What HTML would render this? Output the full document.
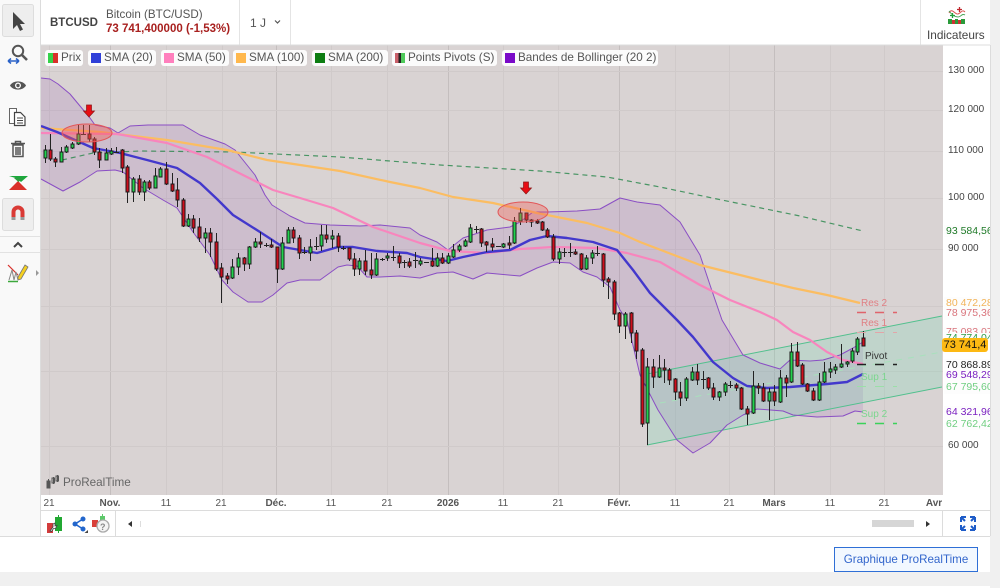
<!DOCTYPE html>
<html lang="fr"><head><meta charset="utf-8"><title>BTCUSD</title>
<style>
html,body{margin:0;padding:0;background:#fff}
#p{position:relative;width:1000px;height:588px;overflow:hidden;background:#fff;font-family:"Liberation Sans",sans-serif;color:#555}
.a{position:absolute}
.t{position:absolute;white-space:nowrap}
.chip{position:absolute;top:50px;height:16px;background:#fbfbfb;border-radius:3px;font-size:11.7px;line-height:16px;color:#555;white-space:nowrap}
.chip i{position:absolute;left:3px;top:3px;width:10px;height:10px;display:block}
.chip span{position:absolute;left:16px;top:0}
.y{position:absolute;left:948px;font-size:10px;line-height:12px;color:#444;white-space:nowrap}
.l{position:absolute;left:944px;width:46px;overflow:hidden;background:#fdfdfd;font-size:10.5px;white-space:nowrap;padding-left:2px;box-sizing:border-box}
.x{position:absolute;top:498px;width:40px;margin-left:-20px;text-align:center;font-size:10px;line-height:12px;color:#555}
</style></head><body><div id="p">
<div class="a" style="left:0;top:0;width:40px;height:536px;background:#f9f9f9;border-right:1px solid #e2e2e2"></div>
<div class="a" style="left:990px;top:0;width:10px;height:588px;background:#f0f0f0"></div>
<div class="a" style="left:0;top:572px;width:1000px;height:14px;background:#f0f0f0"></div>
<div class="a" style="left:239px;top:0;width:1px;height:45px;background:#e4e4e4"></div>
<div class="a" style="left:290px;top:0;width:1px;height:45px;background:#e4e4e4"></div>
<div class="a" style="left:920px;top:0;width:1px;height:45px;background:#e4e4e4"></div>
<div class="t" style="left:50px;top:16px;font-size:11.5px;font-weight:bold;color:#444;line-height:14px">BTCUSD</div>
<div class="t" style="left:106px;top:8px;font-size:11.6px;color:#555;line-height:14px">Bitcoin (BTC/USD)</div>
<div class="t" style="left:106px;top:22px;font-size:11.5px;font-weight:bold;color:#a8201f;line-height:14px">73 741,400000 (-1,53%)</div>
<div class="t" style="left:250px;top:16px;font-size:12px;color:#555;line-height:14px">1 J</div>
<div class="t" style="left:927px;top:28px;font-size:11.8px;color:#444;line-height:14px">Indicateurs</div>

<svg class="a" style="left:0;top:0;filter:blur(.3px)" width="1000" height="588" viewBox="0 0 1000 588">
<rect x="41" y="45" width="902" height="450" fill="#d9d3d3"/>
<g stroke="#d0caca" fill="none">
<path d="M49.5 45V495M166.5 45V495M222.5 45V495M331.5 45V495M387.5 45V495M503.5 45V495M558.5 45V495M675.5 45V495M729.5 45V495M830.5 45V495M884.5 45V495"/>
<path stroke="#c4bebe" d="M110.5 45V495M276.5 45V495M448.5 45V495M619.5 45V495M774.5 45V495"/>
<path d="M41 71.5H943M41 110.5H943M41 151.5H943M41 198.5H943M41 249.5H943M41 306.5H943M41 371.5H943M41 446.5H943"/>
</g>
<path fill="#7a2aa8" fill-opacity=".12" d="M41 78L50 79L58 84L70 94L80 106L90 118L95 125L110 128L118 133L130 126L148 125L183 125L200 135L225 144L235 150L255 175L265 195L272 205L290 216L305 223L330 225L360 226L380 225L410 228L420 235L437 242L448 250L463 238L487 230L510 227L520 222L533 212L547 212L577 211L600 209L620 198L637 202L660 205L680 222L700 255L710 285L722 320L743 355L760 363L780 369L790 360L810 361L823 360L840 355L853 348L863 342L863 412L855 411L843 416L817 417L793 415L783 411L757 409L743 415L727 425L710 443L693 453L677 440L658 410L640 375L627 320L620 310L610 287L597 277L583 272L570 263L553 262L537 268L520 276L487 273L473 279L453 272L437 273L420 278L400 276L380 277L367 277L357 266L347 265L338 267L320 280L300 280L287 283L273 295L262 302L248 302L233 292L222 280L210 255L193 232L177 208L163 200L143 188L123 172L115 170L97 171L80 182L63 191L41 179Z"/>
<path fill="#78d7b4" fill-opacity=".25" d="M647 374L942 316V387L647 445Z"/>
<path fill="none" stroke="#52c08e" stroke-width="1" d="M647 374L942 316M647 445L942 387"/>
<path fill="none" stroke="#a8e0bc" stroke-dasharray="6 6" d="M660 403L942 352"/>
<g fill="none" stroke="#8a4ec4" stroke-width="1" stroke-linejoin="round">
<path d="M41 78L50 79L58 84L70 94L80 106L90 118L95 125L110 128L118 133L130 126L148 125L183 125L200 135L225 144L235 150L255 175L265 195L272 205L290 216L305 223L330 225L360 226L380 225L410 228L420 235L437 242L448 250L463 238L487 230L510 227L520 222L533 212L547 212L577 211L600 209L620 198L637 202L660 205L680 222L700 255L710 285L722 320L743 355L760 363L780 369L790 360L810 361L823 360L840 355L853 348L863 342"/>
<path d="M41 179L63 191L80 182L97 171L115 170L123 172L143 188L163 200L177 208L193 232L210 255L222 280L233 292L248 302L262 302L273 295L287 283L300 280L320 280L338 267L347 265L357 266L367 277L380 277L400 276L420 278L437 273L453 272L473 279L487 273L520 276L537 268L553 262L570 263L583 272L597 277L610 287L620 310L627 320L640 375L658 410L677 440L693 453L710 443L727 425L743 415L757 409L783 411L793 415L817 417L843 416L855 411L863 412"/>
</g>
<path fill="none" stroke="#2f8a50" stroke-opacity=".85" stroke-width="1.200" stroke-dasharray="5 4" d="M62 160L93 153L140 151L233 152L340 157L440 165L540 171L607 177L660 187L717 199L800 216L863 231"/>
<path fill="none" stroke="#fbbd62" stroke-width="2.200" stroke-linejoin="round" d="M41 128L100 132L167 140L227 150L267 160L340 171L390 182L420 188L453 197L493 203L537 213L587 223L620 233L640 242L700 265L760 280L793 288L827 295L860 303"/>
<path fill="none" stroke="#f885bd" stroke-width="2.200" stroke-linejoin="round" d="M41 133L117 134L167 143L207 157L233 170L273 190L300 198L333 208L373 227L420 243L450 251L487 253L520 249L553 247L597 248L627 253L660 262L700 285L730 300L760 312L777 320L793 332L810 340L827 352L843 360L863 364"/>
<path fill="none" stroke="#4338cc" stroke-width="2.400" stroke-linejoin="round" d="M41 126L57 132L93 148L120 153L147 160L177 168L200 183L217 199L233 215L260 232L283 247L317 253L338 247L353 247L377 251L407 253L420 257L447 261L463 257L487 252L510 250L530 240L547 236L567 238L593 242L617 250L633 270L650 293L677 320L693 337L713 362L733 378L747 386L767 388L790 387L827 384L847 382L863 374"/>
<path fill="none" stroke="#222" stroke-width="1" d="M45.5 145V163M50.5 134V161M55.5 157V167M61.5 147V162M66.5 145V153M72.5 142V149M78.5 125V145M83.5 125V135M89.5 125V142M94.5 137V155M99.5 148V168M106.5 148V160M111.5 148V155M116.5 147V153M122.5 149V173M127.5 165V203M133.5 177V202M139.5 175V195M144.5 180V201M149.5 180V190M155.5 168V188M160.5 167V177M166.5 162V185M172.5 173V192M177.5 178V207M183.5 198V227M188.5 214V227M193.5 215V233M199.5 218V242M205.5 228V253M210.5 228V257M216.5 233V271M221.5 263V303M227.5 273V284M232.5 259V279M238.5 253V275M244.5 257V271M249.5 246V269M255.5 238V248M260.5 232V248M266.5 243V247M271.5 239V248M277.5 247V283M282.5 237V270M288.5 227V243M293.5 227V243M299.5 235V259M304.5 247V254M310.5 239V261M316.5 237V250M321.5 225V251M326.5 225V243M332.5 230V248M338.5 233V252M343.5 246V250M349.5 248V261M354.5 253V276M359.5 258V275M365.5 250V275M371.5 253V279M376.5 253V276M382.5 258V261M387.5 253V261M393.5 246V261M399.5 253V268M404.5 260V268M409.5 258V268M415.5 252V268M420.5 258V266M432.5 248V267M437.5 253V267M442.5 253V264M448.5 253V264M453.5 244V258M459.5 244V252M465.5 239V247M470.5 224V243M476.5 226V233M481.5 228V247M486.5 241V252M492.5 238V251M503.5 243V248M509.5 236V249M514.5 217V244M520.5 208V225M526.5 213V223M531.5 219V227M537.5 219V224M542.5 221V231M547.5 228V238M553.5 234V261M559.5 248V264M564.5 248V257M570.5 243V257M575.5 249V255M581.5 253V270M586.5 255V270M592.5 250V264M597.5 246V256M603.5 253V287M608.5 277V299M614.5 280V320M619.5 312V333M625.5 312V339M631.5 312V343M636.5 330V359M642.5 348V427M647.5 358V445M653.5 359V388M659.5 355V378M664.5 359V383M669.5 368V385M675.5 378V400M680.5 382V406M686.5 377V401M692.5 367V381M697.5 364V385M703.5 371V389M708.5 377V390M713.5 383V400M719.5 391V401M725.5 382V396M730.5 381V388M736.5 383V391M741.5 387V410M747.5 406V425M753.5 371V414M758.5 383V394M763.5 383V402M769.5 388V420M774.5 385V406M780.5 370V403M786.5 375V397M791.5 343V383M797.5 342V367M802.5 363V385M807.5 383V392M813.5 388V401M819.5 373V401M824.5 362V383M830.5 362V378M835.5 364V374M841.5 344V368M847.5 361V367M852.5 348V363M857.5 337V355M863.5 331V346"/>
<path stroke="#222" stroke-width="1" d="M81 134.5h5M114 152.5h5M264 245.5h5M302 252.5h5M314 246.5h5M341 248.5h5M380 259.5h5M391 257.5h5M402 262.5h5M413 260.5h5M424 262.5h5M474 229.5h5M496 246.5h5M562 252.5h5M568 252.5h5M595 253.5h5M701 379.5h5M728 385.5h5"/>
<path fill="#cf0f1d" stroke="#1a1a1a" stroke-width="1" d="M49 150h3V159h-3zM54 159h3V162h-3zM88 134h3V139h-3zM93 139h3V152h-3zM98 152h3V160h-3zM121 150h3V168h-3zM126 167h3V192h-3zM138 179h3V192h-3zM148 182h3V188h-3zM165 169h3V184h-3zM171 184h3V191h-3zM176 190h3V200h-3zM182 200h3V226h-3zM192 219h3V228h-3zM198 227h3V238h-3zM209 233h3V242h-3zM215 242h3V269h-3zM220 268h3V277h-3zM226 276h3V279h-3zM243 258h3V264h-3zM259 242h3V244h-3zM270 245h3V247h-3zM276 247h3V269h-3zM292 230h3V238h-3zM298 238h3V253h-3zM325 235h3V239h-3zM337 236h3V247h-3zM348 248h3V259h-3zM353 259h3V269h-3zM364 261h3V271h-3zM370 270h3V275h-3zM398 256h3V263h-3zM408 262h3V266h-3zM431 261h3V266h-3zM441 258h3V263h-3zM480 229h3V243h-3zM485 242h3V245h-3zM491 244h3V247h-3zM508 243h3V245h-3zM525 213h3V220h-3zM530 220h3V222h-3zM536 221h3V223h-3zM541 222h3V230h-3zM546 230h3V237h-3zM552 237h3V259h-3zM574 252h3V254h-3zM580 254h3V269h-3zM602 254h3V280h-3zM607 279h3V282h-3zM613 282h3V314h-3zM618 313h3V326h-3zM630 313h3V333h-3zM635 333h3V351h-3zM641 350h3V424h-3zM652 367h3V377h-3zM663 368h3V370h-3zM668 370h3V380h-3zM674 379h3V392h-3zM679 392h3V398h-3zM696 372h3V380h-3zM707 378h3V388h-3zM712 388h3V397h-3zM735 385h3V388h-3zM740 388h3V409h-3zM746 409h3V414h-3zM757 386h3V388h-3zM762 388h3V401h-3zM773 392h3V401h-3zM785 378h3V383h-3zM796 352h3V366h-3zM801 365h3V384h-3zM806 384h3V391h-3zM812 391h3V400h-3zM862 338h3V346h-3z"/>
<path fill="#22d24e" stroke="#1a1a1a" stroke-width="1" d="M44 150h3V158h-3zM60 152h3V162h-3zM65 147h3V152h-3zM71 144h3V148h-3zM77 134h3V144h-3zM105 153h3V160h-3zM110 151h3V154h-3zM132 179h3V192h-3zM143 182h3V192h-3zM154 176h3V188h-3zM159 169h3V177h-3zM187 219h3V226h-3zM204 233h3V238h-3zM231 267h3V278h-3zM237 258h3V267h-3zM248 247h3V264h-3zM254 242h3V247h-3zM281 243h3V269h-3zM287 230h3V243h-3zM309 247h3V253h-3zM320 235h3V246h-3zM331 236h3V239h-3zM358 261h3V269h-3zM375 259h3V275h-3zM386 256h3V258h-3zM419 261h3V264h-3zM436 258h3V266h-3zM447 256h3V263h-3zM452 250h3V257h-3zM458 246h3V250h-3zM464 241h3V246h-3zM469 228h3V242h-3zM502 244h3V247h-3zM513 221h3V243h-3zM519 213h3V221h-3zM558 252h3V259h-3zM585 258h3V269h-3zM591 253h3V258h-3zM624 314h3V326h-3zM646 367h3V423h-3zM658 368h3V377h-3zM685 379h3V398h-3zM691 372h3V380h-3zM718 392h3V397h-3zM724 384h3V392h-3zM752 386h3V413h-3zM768 392h3V401h-3zM779 378h3V402h-3zM790 352h3V382h-3zM818 382h3V400h-3zM823 372h3V382h-3zM829 369h3V372h-3zM834 367h3V370h-3zM840 364h3V367h-3zM846 362h3V364h-3zM851 351h3V361h-3zM856 339h3V352h-3z"/>
<ellipse cx="87" cy="133" rx="25" ry="9" fill="#f05a50" fill-opacity=".42" stroke="#e2585a"/>
<ellipse cx="523" cy="212" rx="25" ry="10" fill="#f05a50" fill-opacity=".36" stroke="#e2585a"/>
<path fill="#e80d14" stroke="#8a1515" stroke-width=".7" d="M86.5 105h5v6h3l-5.500 6l-5.500-6h3z"/>
<path fill="#e80d14" stroke="#8a1515" stroke-width=".7" d="M523.500 182h5v6h3l-5.500 6l-5.500-6h3z"/>
<g stroke-width="1.600" stroke-dasharray="9 9" fill="none">
<path stroke="#e0636b" d="M857 312.500H897"/>
<path stroke="#e3a5a8" stroke-width="1" d="M857 332.500H897"/>
<path stroke="#222" d="M857 364.500H897"/>
<path stroke="#9bdfa8" stroke-width="1" d="M857 386.500H897"/>
<path stroke="#3bd25a" d="M857 423.500H897"/>
</g>
<text x="861" y="306" font-family="Liberation Sans" font-size="10" fill="#e07f84">Res 2</text>
<text x="861" y="326" font-family="Liberation Sans" font-size="10" fill="#e07f84">Res 1</text>
<text x="865" y="359" font-family="Liberation Sans" font-size="10" fill="#333">Pivot</text>
<text x="861" y="380" font-family="Liberation Sans" font-size="10" fill="#7bd68e">Sup 1</text>
<text x="861" y="417" font-family="Liberation Sans" font-size="10" fill="#7bd68e">Sup 2</text>
<!-- watermark -->
<g stroke="#555" fill="none"><path d="M48.500 479V488M53.500 477V484M57.500 475V482" /><rect x="47" y="481" width="3" height="7" fill="#555"/><rect x="52" y="478" width="2.500" height="5"/><rect x="56" y="476" width="2.500" height="5"/></g>
<text x="63" y="486" font-family="Liberation Sans" font-size="11.700" fill="#666">ProRealTime</text>

<!-- left toolbar -->
<rect x="2.500" y="4.500" width="31" height="32" rx="2" fill="#eeeeee" stroke="#dddddd"/>
<path fill="#444" d="M13 12V29L17 25L20 31L23 29.500L20 24H25Z"/>
<circle cx="18" cy="51" r="5.200" fill="none" stroke="#555" stroke-width="2"/><path stroke="#555" stroke-width="2.600" d="M22 55L27 60"/>
<path fill="none" stroke="#2a62c8" stroke-width="1.500" d="M9 61H19M8 61l3-2.500M8 61l3 2.500M19 61l-3-2.500M19 61l-3 2.500"/>
<path fill="#555" d="M10 85.500C13 80 23 80 26 85.500C23 91 13 91 10 85.500Z"/><circle cx="18" cy="85.500" r="3" fill="#fff"/><circle cx="18" cy="85.500" r="1.700" fill="#555"/>
<path fill="#fff" stroke="#666" d="M9.500 108.500h7v15h-7z"/><path fill="#fff" stroke="#444" stroke-width="1.200" d="M14.500 112.500h6l4.500 4.500v8.500h-10.500z"/><path stroke="#444" d="M17 118h6M17 120.500h6M17 123h6"/>
<path fill="none" stroke="#555" stroke-width="1.500" d="M13 145h10v11.500h-10zM11 143.500h14M15.500 143.500v-2h5v2M16 147v8M18 147v8M20 147v8"/>
<path fill="#1ca83c" d="M9 176H28L21 182L17 178.500Z"/><path fill="#d9302a" d="M9 190L18 181L22 185L27 190Z"/><path fill="#2a9e40" d="M14 178h9l-4.500 4z"/>
<rect x="2.500" y="198.500" width="31" height="32" rx="2" fill="#eeeeee" stroke="#dddddd"/>
<path fill="none" stroke="#d93a35" stroke-width="4" d="M13.500 217V212a4.500 4.500 0 0 1 9 0V217"/><path fill="#999" d="M11.500 217h4v3h-4zM20.500 217h4v3h-4z"/>
<path stroke="#e2e2e2" d="M0 236.500H40M0 252.500H40"/>
<path fill="none" stroke="#444" stroke-width="2" d="M14 247L18 243L22 247"/>
<path fill="none" stroke="#d9302a" stroke-width="1.200" d="M8 265L18 275"/><path fill="none" stroke="#888" d="M9 280L12 270L14 280L16 272L18 280"/><path stroke="#3ca83c" stroke-width="1.500" d="M8 281.500H18"/>
<path fill="#f5d020" stroke="#777" stroke-width=".8" d="M18 277L25 265L28 267L21 279L18 280Z"/>
<path fill="#999" d="M36 270l3 3l-3 3z"/>

<!-- indicators icon -->
<path fill="none" stroke="#d9534f" d="M949 13c3-6 6 2 9 1s4-5 7-2"/>
<path fill="none" stroke="#4aa85a" d="M949 11c3 4 6 6 9 6s4-4 7-2"/>
<path stroke="#c0272d" stroke-width="1.300" d="M959.500 7V12M957 9.500H962"/>
<path stroke="#1f9e3a" stroke-width="1.300" d="M952.500 13V18M950 15.500H955"/>
<path fill="#c33" d="M948 20h17v4h-17z"/><path fill="#2a9a3a" d="M948 19h4v5h-4zM955 19h3v5h-3zM961 19h4v5h-4z"/>
<path fill="none" stroke="#555" stroke-width="1.200" d="M275 20.500l2.500 2.500l2.500-2.500"/>

<!-- bottom bar -->
<path stroke="#dcdcdc" d="M41 510.500H990M0 536.500H990M115.500 511V536M942.500 511V536M990.500 45V536M40.500 0V536M41 45H990" fill="none"/>
<path fill="#21a832" d="M55 517h7v14h-7z"/><path stroke="#21a832" d="M58.500 515V533"/><path fill="#d33c3c" d="M47 523h6v10h-6z"/><path fill="#fff" stroke="#444" stroke-width=".8" d="M50 531l3-4v-3l2-1v3l2-.5l-1.500 3h-2l-2 3z"/>
<g fill="#2266cc"><circle cx="75" cy="524" r="2.500"/><circle cx="83" cy="519" r="2.500"/><circle cx="83" cy="529" r="2.500"/></g><path stroke="#2266cc" stroke-width="1.600" d="M75 524L83 519M75 524L83 529"/><path fill="#444" d="M88 530l-3.500 3h3.500z"/>
<path fill="#d9403a" d="M92 520h6v7h-6z"/><path fill="#5dc96a" d="M100 516h5v5h-5zM102 514h1v3h-1z"/>
<circle cx="103" cy="526" r="6" fill="#f4f4f4" stroke="#aaa" stroke-width="1.300"/>
<text x="100" y="530" font-family="Liberation Sans" font-size="9" font-weight="bold" fill="#888">?</text>
<path fill="#333" d="M132 521v6l-4-3z"/><path stroke="#ddd" d="M140.500 521V527"/>
<rect x="872" y="520" width="42" height="7" fill="#d6d6d6"/>
<path fill="#333" d="M926 521v6l4-3z"/>
<g fill="none" stroke="#1e5cc8" stroke-width="2"><path d="M961 517h5M961 517v5M961 517l4 4M975 517h-5M975 517v5M975 517l-4 4M961 530h5M961 530v-5M961 530l4-4M975 530h-5M975 530v-5M975 530l-4-4"/></g>
</svg>

<div class="chip" style="left:45px;width:38px"><i style="background:linear-gradient(90deg,#35d24a 50%,#d9302a 50%)"></i><span>Prix</span></div>
<div class="chip" style="left:88px;width:68px"><i style="background:#2f3fd8"></i><span>SMA (20)</span></div>
<div class="chip" style="left:161px;width:68px"><i style="background:#ff7fbd"></i><span>SMA (50)</span></div>
<div class="chip" style="left:233px;width:74px"><i style="background:#ffb84d"></i><span>SMA (100)</span></div>
<div class="chip" style="left:312px;width:76px"><i style="background:#0d7d12"></i><span>SMA (200)</span></div>
<div class="chip" style="left:392px;width:105px"><i style="background:linear-gradient(90deg,#c9606a 33%,#222 33%,#222 60%,#4ec95a 60%)"></i><span>Points Pivots (S)</span></div>
<div class="chip" style="left:502px;width:156px"><i style="background:#7a0ac8"></i><span>Bandes de Bollinger (20 2)</span></div>

<div class="y" style="top:65px">130 000</div>
<div class="y" style="top:104px">120 000</div>
<div class="y" style="top:145px">110 000</div>
<div class="y" style="top:192px">100 000</div>
<div class="y" style="top:243px">90 000</div>
<div class="y" style="top:440px">60 000</div>
<div class="l" style="top:225px;height:12px;line-height:12px;color:#1f7a28">93 584,56</div>
<div class="l" style="top:297px;height:10px;line-height:12px;color:#f2b45a">80 472,28</div>
<div class="l" style="top:307px;height:13px;line-height:13px;color:#d9747c">78 975,36</div>
<div class="l" style="top:327px;height:6px;line-height:11px;color:#d9747c">75 083,07</div>
<div class="l" style="top:333px;height:6px;line-height:11px;color:#2e9a48">74 774,04</div>
<div class="l" style="top:359px;height:9px;line-height:12px;color:#222">70 868,89</div>
<div class="l" style="top:368px;height:13px;line-height:14px;color:#7a1fc0">69 548,29</div>
<div class="l" style="top:381px;height:13px;line-height:13px;color:#6fce80">67 795,60</div>
<div class="l" style="top:406px;height:12px;line-height:12px;color:#7a1fc0">64 321,96</div>
<div class="l" style="top:418px;height:12px;line-height:12px;color:#6fce80">62 762,42</div>
<div class="t" style="left:942px;top:338px;width:46px;height:14px;border-radius:3px;background:#fdb913;color:#111;font-size:11px;line-height:14px;text-align:center">73 741,4</div>

<div class="x" style="left:49px">21</div>
<div class="x" style="left:110px;font-weight:bold">Nov.</div>
<div class="x" style="left:166px">11</div>
<div class="x" style="left:221px">21</div>
<div class="x" style="left:276px;font-weight:bold">Déc.</div>
<div class="x" style="left:331px">11</div>
<div class="x" style="left:387px">21</div>
<div class="x" style="left:448px;font-weight:bold">2026</div>
<div class="x" style="left:503px">11</div>
<div class="x" style="left:558px">21</div>
<div class="x" style="left:619px;font-weight:bold">Févr.</div>
<div class="x" style="left:675px">11</div>
<div class="x" style="left:729px">21</div>
<div class="x" style="left:774px;font-weight:bold">Mars</div>
<div class="x" style="left:830px">11</div>
<div class="x" style="left:884px">21</div>
<div class="x" style="left:934px;font-weight:bold">Avr</div>

<div class="t" style="left:834px;top:547px;width:144px;height:25px;box-sizing:border-box;border:1px solid #2f6fd6;background:#f2f8ff;color:#3366cc;font-size:11.6px;line-height:23px;text-align:center">Graphique ProRealTime</div>
</div></body></html>
